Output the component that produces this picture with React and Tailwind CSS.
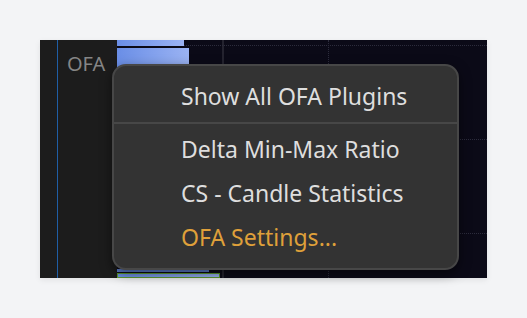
import React from "react";

const items = [
  { label: "Delta Min-Max Ratio" },
  { label: "CS - Candle Statistics" },
  { label: "OFA Settings...", accent: true },
];

export default function App() {
  return (
    <div
      className="w-[527px] h-[318px] bg-[#f3f4f6] pt-[40px] pl-[40px]"
      style={{ fontFamily: '"Noto Sans", "Open Sans", sans-serif' }}
    >
      <div className="relative flex w-[447px] h-[238px] shadow-[0_2px_6px_rgba(0,0,0,0.08)]">
        {/* sidebar */}
        <div className="flex w-[77px] h-full bg-[#1c1c1c]">
          <div className="w-[17px]" />
          <div className="w-px bg-[#1f5ea6]" />
          <div className="pl-[9px] pt-[12px] text-[20px] leading-[24px] text-[#858585]">OFA</div>
        </div>

        {/* chart canvas */}
        <div className="relative flex-1 h-full bg-[#0b0a17] overflow-hidden">
          <div className="absolute left-[105px] top-0 bottom-0 w-[2px] bg-[#24232f]" />
          <div className="absolute left-[211px] top-0 bottom-0 border-l border-dotted border-[#2c2c3c]" />
          <div className="absolute left-0 right-0 top-[5px] border-t border-dotted border-[#2c2c3c]" />
          <div className="absolute left-0 right-0 top-[99px] border-t border-dotted border-[#2c2c3c]" />
          <div className="absolute left-0 right-0 top-[193px] border-t border-dotted border-[#2c2c3c]" />

          <div className="absolute left-0 top-0 w-[67px] h-[6px] bg-gradient-to-r from-[#6a8ee6] to-[#9bb3f3]" />
          <div className="absolute left-0 top-[8px] w-[72px] h-[60px] bg-gradient-to-r from-[#6a8ee6] to-[#9bb3f3]" />
          <div className="absolute left-0 top-[229px] w-[92px] h-[3px] bg-[#5f7fd0]" />
          <div className="absolute left-0 top-[233px] w-[103px] h-[5px] bg-gradient-to-r from-[#6a8ee6] to-[#9bb3f3] border border-[#5c9a2e]" />
        </div>

        {/* popup menu */}
        <div className="absolute left-[72px] top-[24px] w-[347px] h-[206px] rounded-[14px] border-2 border-[#474747] bg-[#333333] shadow-[0_4px_12px_rgba(0,0,0,0.5)] overflow-hidden">
          <div className="flex items-center h-[56px] pl-[67px] pt-[4px] text-[23px] text-[#dedede]">
            Show All OFA Plugins
          </div>
          <div className="h-[2px] bg-[#474747]" />
          <div className="pt-[3px]">
            {items.map((it) => (
              <div
                key={it.label}
                className={`flex items-center h-[44px] pl-[67px] text-[23px] ${
                  it.accent ? "text-[#dfa03a]" : "text-[#dedede]"
                }`}
              >
                {it.label}
              </div>
            ))}
          </div>
        </div>
      </div>
    </div>
  );
}
